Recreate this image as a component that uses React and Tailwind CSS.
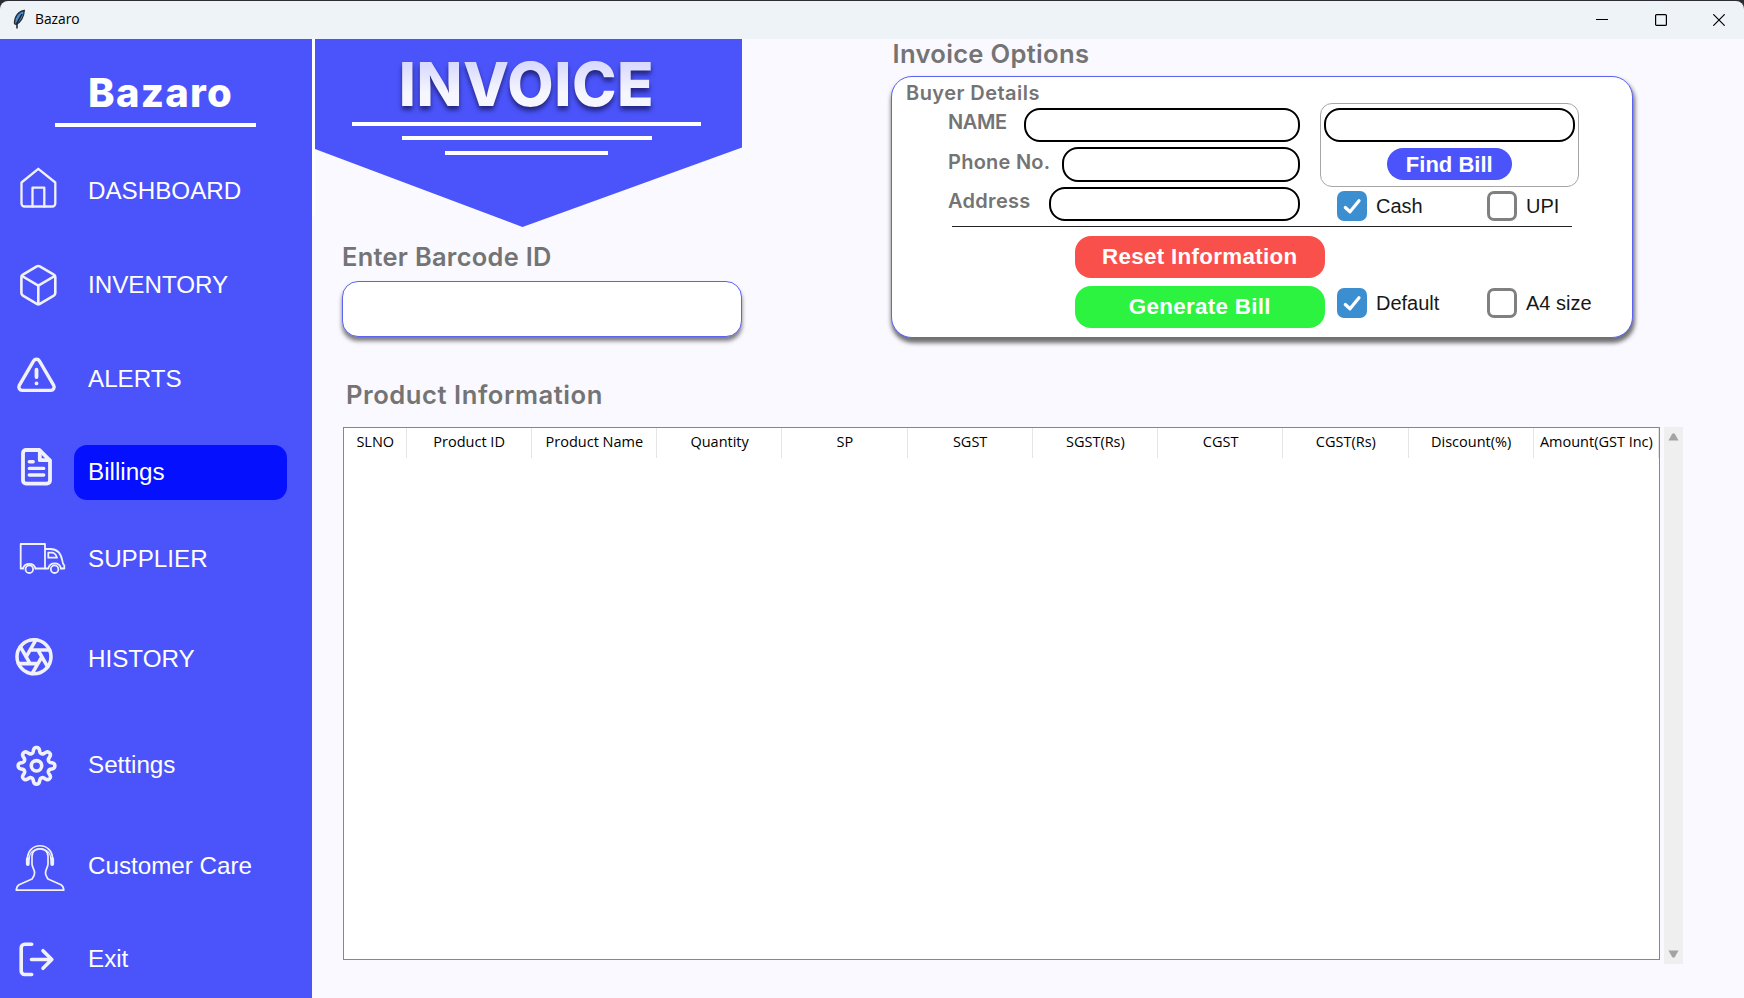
import React from 'react';

const gearPath = (() => {
  const pts = [];
  for (let i = 0; i < 240; i++) {
    const a = (i / 240) * Math.PI * 2;
    const w = Math.tanh(1.5 * Math.cos(8 * a)) / Math.tanh(1.5);
    const r = 15.7 + 2.6 * w;
    pts.push(`${(36.5 + r * Math.sin(a)).toFixed(2)} ${(27.8 - r * Math.cos(a)).toFixed(2)}`);
  }
  return `M${pts.join('L')}Z`;
})();

const icons = {
  home: (
    <g strokeWidth="2.3">
      <path d="M38.3 4.8 55.3 18.5V39.5a3 3 0 0 1-3 3H24.5a3 3 0 0 1-3-3V18.5Z" />
      <path d="M32.5 42.5V23.7H44.3V42.5" />
    </g>
  ),
  box: (
    <g strokeWidth="2.6">
      <path d="M36.8 8.4a3 3 0 0 1 3 0L53.8 16.6a3 3 0 0 1 1.5 2.6V35a3 3 0 0 1-1.5 2.6L39.8 45.8a3 3 0 0 1-3 0L22.9 37.6a3 3 0 0 1-1.5-2.6V19.2a3 3 0 0 1 1.5-2.6Z" />
      <path d="M22 18 38.3 27.7 54.7 18M38.3 27.7V46" />
    </g>
  ),
  alert: (
    <g strokeWidth="3.4">
      <path d="M33.6 8.9a3.4 3.4 0 0 1 5.8 0L53.7 33.3a3.4 3.4 0 0 1-2.9 5.1H22.2a3.4 3.4 0 0 1-2.9-5.1Z" />
      <path d="M36.5 17.7V25M36.5 31.3V31.4" strokeWidth="3.8" />
    </g>
  ),
  doc: (
    <g strokeWidth="3.8">
      <path d="M39.5 5H26a3 3 0 0 0-3 3V35.6a3 3 0 0 0 3 3H47a3 3 0 0 0 3-3V15.6Z" />
      <path d="M39.8 6V15.2H49.5" />
      <path d="M29.3 16.7H33.2M29.3 23.4H43.7M29.3 30H43.7" strokeWidth="3.4" />
    </g>
  ),
  truck: (
    <g strokeWidth="1.8">
      <path d="M23 36.5H20.7V12H45V36.5H35.5M45 17H50.5C57.5 17 61 22 62.3 28.5 62.6 31.5 63 32.5 64.3 33.5V36.5H61" />
      <path d="M35.5 36.5A6.5 6.5 0 0 0 23 36.5M61 36.5A6.5 6.5 0 0 0 48.3 36.5H45" />
      <circle cx="29.3" cy="37.2" r="3.8" />
      <circle cx="54.6" cy="37.2" r="3.8" />
      <path d="M48.3 20.7V25.7H57C56 22.5 54 20.7 51.5 20.7Z" />
    </g>
  ),
  aperture: (
    <g transform="translate(13.6 4.4) scale(1.7)" strokeWidth="2.1">
      <circle cx="12" cy="12" r="10" />
      <path d="m14.31 8 5.74 9.94M9.69 8h11.48M7.38 12l5.74-9.94M9.69 16 3.95 6.06M14.31 16H2.83M16.62 12l-5.74 9.94" />
    </g>
  ),
  gear: (
    <g strokeWidth="3.6">
      <path d={gearPath} />
      <circle cx="36.5" cy="27.8" r="5.2" />
    </g>
  ),
  person: (
    <g strokeWidth="1.7">
      <path d="M27.5 21C26.5 2 53.5 2 52.5 21" />
      <path d="M29.3 20C29 6 51 6 50.7 20" strokeWidth="1.2" />
      <path d="M27.8 20V25M52.2 20V25" strokeWidth="3.8" />
      <path d="M32 25V17C32 7.5 48 7.5 48 17V25C48 28 45.5 30.5 45.5 34 45.5 36.5 46.5 37.5 48 40L61 45.8C63.3 47 63.6 49 63.8 51.2H16.3C16.5 49 16.8 47 19 45.8L32 40C33.8 37.5 34.6 36.5 34.6 34 34.6 30.5 32 28 32 25Z" />
    </g>
  ),
  exit: (
    <g strokeWidth="3.6">
      <path d="M31.7 12.3H24.7a3.5 3.5 0 0 0-3.5 3.5V39a3.5 3.5 0 0 0 3.5 3.5H31.7" />
      <path d="M31.5 27.5H51.6M43 18.7 51.8 27.5 43 36.3" />
    </g>
  ),
};

const nav = [
  { icon: 'home', label: 'DASHBOARD', gap: 'mt-[37px]' },
  { icon: 'box', label: 'INVENTORY', gap: 'mt-10' },
  { icon: 'alert', label: 'ALERTS', gap: 'mt-10' },
  { icon: 'doc', label: 'Billings', gap: 'mt-[39.5px]', active: true },
  { icon: 'truck', label: 'SUPPLIER', gap: 'mt-[33px]' },
  { icon: 'aperture', label: 'HISTORY', gap: 'mt-[46px]' },
  { icon: 'gear', label: 'Settings', gap: 'mt-[52px]' },
  { icon: 'person', label: 'Customer Care', gap: 'mt-[46.5px]' },
  { icon: 'exit', label: 'Exit', gap: 'mt-[39.5px]' },
];

function NavItem({ icon, label, gap, active }) {
  return (
    <div className={`flex h-[54px] shrink-0 ${gap}`}>
      <svg className="h-[54px] w-[74px] shrink-0" viewBox="0 0 74 54" fill="none" stroke="#f0f1fb" strokeLinecap="round" strokeLinejoin="round">
        {icons[icon]}
      </svg>
      <div className={`flex h-[55px] w-[213px] items-center rounded-[13px] pl-3.5 text-[24.2px] leading-none whitespace-nowrap text-white ${active ? 'bg-[#0510ff]' : ''}`}>
        {label}
      </div>
    </div>
  );
}

function TitleBar() {
  return (
    <div className="bg-[#2c2c34] pt-px">
      <header className="flex h-[38px] items-center rounded-t-lg bg-[#eef3f8]">
        <svg className="ml-3 h-[22px] w-[14px]" viewBox="0 0 14 22">
          <path d="M12.3 1.5C6.5 2.5 2.3 7.5 2.5 14.5L4.2 15.5C8.5 13.5 12 8 12.3 1.5Z" fill="#4d8fd0" stroke="#26313c" strokeWidth="1.3" />
          <path d="M10 5 5 14V19.5" fill="none" stroke="#16202b" strokeWidth="1.5" />
        </svg>
        <span className="-mt-px ml-[9px] font-['Open_Sans',sans-serif] text-[13.8px] text-black">Bazaro</span>
        <div className="mr-[19px] ml-auto flex items-center gap-[46.5px]">
          <svg className="size-3" viewBox="0 0 12 12"><path d="M0 5.5H12" stroke="#000" /></svg>
          <svg className="size-3" viewBox="0 0 12 12" fill="none"><rect x=".6" y=".6" width="10.8" height="10.8" rx="1" stroke="#000" strokeWidth="1.2" /></svg>
          <svg className="size-3" viewBox="0 0 12 12"><path d="M.3.3 11.7 11.7M11.7.3.3 11.7" stroke="#000" strokeWidth="1.2" /></svg>
        </div>
      </header>
    </div>
  );
}

function Field({ label, width, tracking }) {
  return (
    <div className="flex h-[34.5px] items-center justify-between">
      <label className={`pb-[5px] font-['Inter',sans-serif] text-[20px] leading-5 font-semibold text-[#747474] ${tracking}`}>{label}</label>
      <div className={`h-[34.5px] rounded-[16px] border-2 border-black bg-white ${width}`} />
    </div>
  );
}

function Check({ label, checked, className = '' }) {
  return (
    <div className={`flex shrink-0 items-center ${className}`}>
      {checked ? (
        <div className="flex size-[30px] items-center justify-center rounded-[7px] bg-[#3b8ed0]">
          <svg className="size-[30px]" viewBox="0 0 30 30" fill="none" stroke="#fff" strokeWidth="3.2" strokeLinecap="round" strokeLinejoin="round">
            <path d="M8.3 16.5 13 20.8 22 9.7" />
          </svg>
        </div>
      ) : (
        <div className="size-[30px] rounded-[7px] border-3 border-[#808080] bg-white" />
      )}
      <span className="pl-[9px] text-[20px] leading-none whitespace-nowrap text-[#181818]">{label}</span>
    </div>
  );
}

function InvoiceOptions() {
  return (
    <section className="w-[744px]">
      <h2 className="pl-[2.5px] font-['Inter',sans-serif] text-[25.6px] leading-[30px] font-semibold tracking-[0.3px] text-[#747474]">Invoice Options</h2>
      <div className="mt-[7px] ml-px h-[261.5px] w-[742px] rounded-[21px] border border-[#5c63f2] bg-white shadow-[1px_4px_4px_1px_rgba(0,0,0,0.55)]">
        <h3 className="mt-[5.5px] ml-3.5 h-5 font-['Inter',sans-serif] text-[20px] leading-5 font-semibold tracking-[0.45px] text-[#747474]">Buyer Details</h3>
        <div className="flex items-start">
          <div className="ml-14 flex w-[352px] shrink-0 flex-col gap-[5px] pt-[5px]">
            <Field label="NAME" width="w-[276px]" tracking="tracking-[-0.4px]" />
            <Field label="Phone No." width="w-[238.5px]" tracking="tracking-[0.25px]" />
            <Field label="Address" width="w-[251px]" tracking="tracking-[0.3px]" />
          </div>
          <div className="ml-5 shrink-0">
            <div className="flex h-[84.5px] w-[258.5px] flex-col items-center rounded-[12px] border border-[#a6a6a6] pt-1">
              <div className="h-[34.5px] w-[250.5px] rounded-[16px] border-2 border-black bg-white" />
              <button className="mt-[5.5px] h-8 w-[125.5px] rounded-[16px] bg-[#4b54fb] pt-0.5 text-[22px] leading-none font-bold text-white">Find Bill</button>
            </div>
            <div className="mt-[3.5px] flex pl-[17px]">
              <Check label="Cash" checked className="w-[150px]" />
              <Check label="UPI" />
            </div>
          </div>
        </div>
        <div className="mt-[5px] ml-[60px] h-[1.4px] w-[620px] bg-[#222]" />
        <div className="mt-[8.5px] flex items-start">
          <div className="ml-[182.5px] flex w-[250.5px] shrink-0 flex-col gap-[7.5px]">
            <button className="h-[42.5px] rounded-[16px] bg-[#fa504b] pt-px text-[22.4px] leading-none font-bold tracking-[0.3px] text-white">Reset Information</button>
            <button className="h-[42.5px] rounded-[16px] bg-[#2bf340] pt-px text-[22.4px] leading-none font-bold tracking-[0.3px] text-white">Generate Bill</button>
          </div>
          <div className="mt-[52.5px] ml-3 flex shrink-0">
            <Check label="Default" checked className="w-[150px]" />
            <Check label="A4 size" />
          </div>
        </div>
      </div>
    </section>
  );
}

const columns = ['SLNO', 'Product ID', 'Product Name', 'Quantity', 'SP', 'SGST', 'SGST(Rs)', 'CGST', 'CGST(Rs)', 'Discount(%)', 'Amount(GST Inc)'];

export default function App() {
  return (
    <div className="h-[998px] w-[1744px] overflow-hidden bg-[#f9f9ff] font-['Liberation_Sans',Arial,sans-serif]">
      <TitleBar />
      <div className="flex h-[959px]">
        <aside className="flex w-[312px] shrink-0 flex-col bg-[#4b54fb]">
          <h1 className="mt-[33.5px] ml-[88px] h-10 font-['Inter',sans-serif] text-[40px] leading-10 font-extrabold tracking-[1.3px] text-white">Bazaro</h1>
          <div className="mt-[10px] ml-[55px] h-1 w-[200.5px] bg-white" />
          <nav className="flex flex-col">
            {nav.map((n) => <NavItem key={n.label} {...n} />)}
          </nav>
        </aside>
        <main className="flex-1">
          <div className="flex items-start">
            <div className="h-[177px] w-[3px] bg-white" />
            <div className="w-[427px]">
              <div className="flex h-[188px] flex-col items-center bg-[#4b54fb] pt-[15px] pr-1 [clip-path:polygon(0_0,100%_0,100%_108.5px,207.5px_100%,0_110px)]">
                <div className="[filter:drop-shadow(0_4px_2.5px_rgba(10,10,60,0.65))]">
                  <div className="bg-linear-to-b from-[#d8d9fd] from-15% to-[#f6f6ff] to-65% bg-clip-text font-['Inter',sans-serif] text-[60px] leading-[60px] font-extrabold tracking-[0.6px] text-transparent">INVOICE</div>
                </div>
                <div className="mt-2 h-1 w-[349px] bg-white" />
                <div className="mt-[10px] h-1 w-[250px] bg-white" />
                <div className="mt-[11px] h-1 w-[163px] bg-white" />
              </div>
              <div className="pt-[14.5px] pl-[27px]">
                <h2 className="font-['Inter',sans-serif] text-[25.4px] leading-[30px] font-semibold tracking-[0.3px] text-[#747474]">Enter Barcode ID</h2>
                <div className="mt-[9.5px] h-14 w-[400px] rounded-[16px] border border-[#5c63f2] bg-white shadow-[0_4px_4px_0_rgba(0,0,0,0.5)]" />
              </div>
            </div>
            <div className="ml-[148px]">
              <InvoiceOptions />
            </div>
          </div>
          <h2 className="mt-[42px] ml-[34px] font-['Inter',sans-serif] text-[25.6px] leading-[30px] font-semibold tracking-[0.55px] text-[#747474]">Product Information</h2>
          <div className="mt-[17px] ml-[31px] flex gap-1">
            <div className="h-[533.5px] w-[1317px] border border-[#828790] bg-white">
              <div className="grid h-[30px] grid-cols-[62.5px_repeat(10,minmax(0,1fr))]">
                {columns.map((c) => (
                  <div key={c} className="flex items-center justify-center border-r border-[#e5e5e5] pb-px pl-px font-['Open_Sans',sans-serif] text-[14.5px] leading-none whitespace-nowrap text-black">{c}</div>
                ))}
              </div>
            </div>
            <div className="flex h-[537px] w-[19px] flex-col items-center justify-between bg-[#efefef] py-[6px]">
              <svg className="h-2 w-[11px]" viewBox="0 0 11 8"><path d="M4 1.2Q5.5-.5 7 1.2L10.5 7.5H.5Z" fill="#a3a3a3" /></svg>
              <svg className="h-2 w-[11px]" viewBox="0 0 11 8"><path d="M4 6.8Q5.5 8.5 7 6.8L10.5.5H.5Z" fill="#a3a3a3" /></svg>
            </div>
          </div>
        </main>
      </div>
    </div>
  );
}
